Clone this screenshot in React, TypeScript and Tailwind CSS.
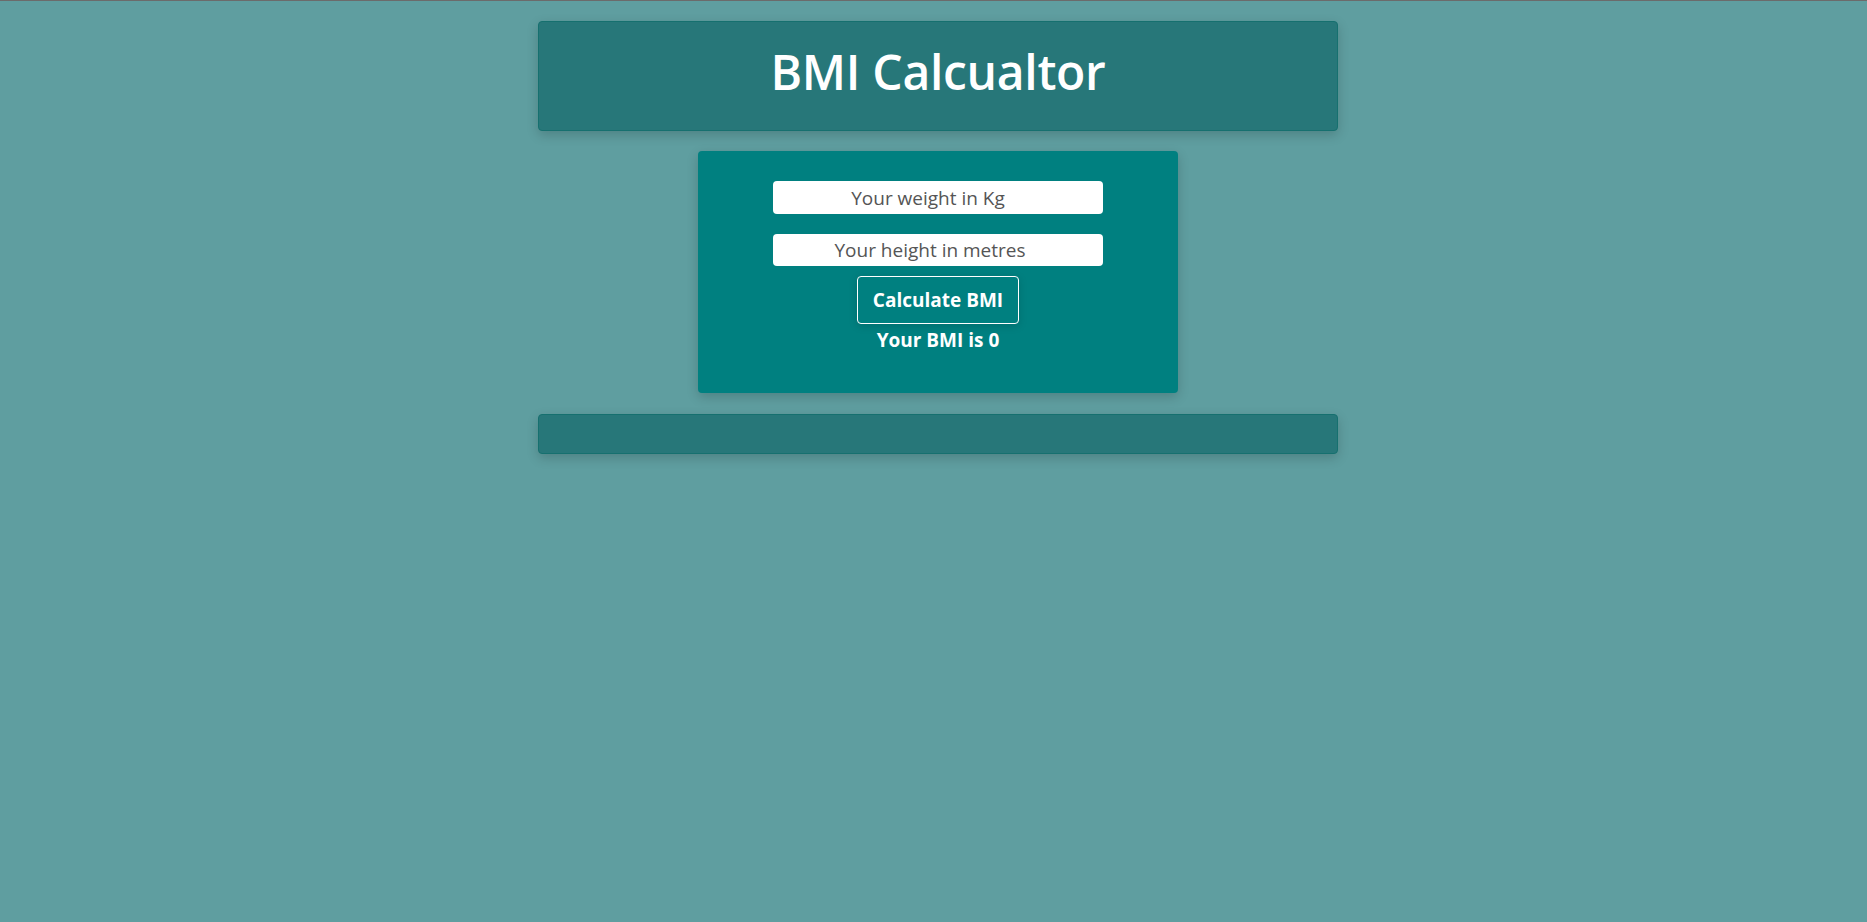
import React from "react";

export default function App() {
  return (
    <div
      className="min-h-[922px] w-full bg-[#5f9ea0] border-t border-[#6b6b6b] flex flex-col items-center pl-[9px]"
      style={{ fontFamily: '"Open Sans", "Noto Sans", sans-serif' }}
    >
      <header className="mt-[20px] w-[800px] h-[110px] bg-[#277779] border border-[#16706f] rounded-[4px] shadow-[0_4px_12px_rgba(0,0,0,0.18)] flex items-center justify-center pb-[8px]">
        <h1 className="text-white text-[48px] font-semibold tracking-[-0.3px] leading-none">BMI Calcualtor</h1>
      </header>

      <main className="mt-[20px] w-[480px] h-[242px] bg-[#008080] rounded-[4px] shadow-[0_4px_12px_rgba(0,0,0,0.18)] flex flex-col items-center pt-[30px]">
        <input
          className="w-[330px] h-[33px] bg-white rounded-[4px] text-center text-[19px] text-[#333] placeholder:text-[#555] outline-none pr-[20px]"
          placeholder="Your weight in Kg"
        />
        <input
          className="mt-[20px] w-[330px] h-[32px] bg-white rounded-[4px] text-center text-[19px] text-[#333] placeholder:text-[#555] outline-none pr-[16px]"
          placeholder="Your height in metres"
        />
        <button className="mt-[10px] w-[162px] h-[48px] border border-white rounded-[4px] bg-[#008080] text-white text-[19px] font-bold shadow-[0_2px_8px_rgba(0,0,0,0.15)]">
          Calculate BMI
        </button>
        <p className="mt-[4px] text-white text-[19px] font-bold leading-[24px]">Your BMI is 0</p>
      </main>

      <footer className="mt-[21px] w-[800px] h-[40px] bg-[#277779] border border-[#16706f] rounded-[4px] shadow-[0_4px_12px_rgba(0,0,0,0.18)]" />
    </div>
  );
}
